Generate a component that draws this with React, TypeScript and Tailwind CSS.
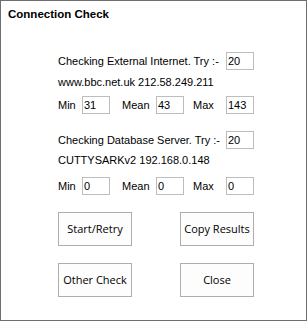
import React from 'react';

const label = "font-['Liberation_Sans',Arial,sans-serif] text-[11px] leading-[14px] text-black";

function Field({ value }: { value: string }) {
  return (
    <div className="flex h-[18px] w-[28px] items-center border border-[#bdbdbd] bg-white pl-[1px]">
      <span className={label}>{value}</span>
    </div>
  );
}

function StatsRow({ min, mean, max }: { min: string; mean: string; max: string }) {
  return (
    <div className="flex h-[18px] items-center">
      <span className={`${label} w-[24px]`}>Min</span>
      <Field value={min} />
      <span className={`${label} ml-[12px] w-[34px]`}>Mean</span>
      <Field value={mean} />
      <span className={`${label} ml-[9px] w-[33px]`}>Max</span>
      <Field value={max} />
    </div>
  );
}

function Button({ children }: { children: React.ReactNode }) {
  return (
    <button className="flex h-[34px] w-[74px] items-center justify-center border border-[#adadad] bg-[#fdfdfd] font-['Open_Sans',sans-serif] text-[11px] text-black">
      {children}
    </button>
  );
}

export default function App() {
  return (
    <div className="flex h-[321px] w-[307px] flex-col border border-[#6e6e6e] bg-white">
      <div className="mt-[6px] ml-[7px] font-['Liberation_Sans',Arial,sans-serif] text-[11.5px] font-bold leading-[14px] text-black">
        Connection Check
      </div>

      <div className="mt-[31px] flex w-[253px] flex-col pl-[57px]">
        <div className="flex h-[18px] items-center justify-between">
          <span className={label}>Checking External Internet. Try :-</span>
          <Field value="20" />
        </div>
        <div className={`${label} mt-[5px]`}>www.bbc.net.uk 212.58.249.211</div>
        <div className="mt-[7px]">
          <StatsRow min="31" mean="43" max="143" />
        </div>

        <div className="mt-[17px] flex h-[18px] items-center justify-between">
          <span className={label}>Checking Database Server. Try :-</span>
          <Field value="20" />
        </div>
        <div className={`${label} mt-[4px]`}>CUTTYSARKv2 192.168.0.148</div>
        <div className="mt-[10px]">
          <StatsRow min="0" mean="0" max="0" />
        </div>

        <div className="mt-[17px] flex justify-between">
          <Button>Start/Retry</Button>
          <Button>Copy Results</Button>
        </div>
        <div className="mt-[17px] flex justify-between">
          <Button>Other Check</Button>
          <Button>Close</Button>
        </div>
      </div>
    </div>
  );
}
